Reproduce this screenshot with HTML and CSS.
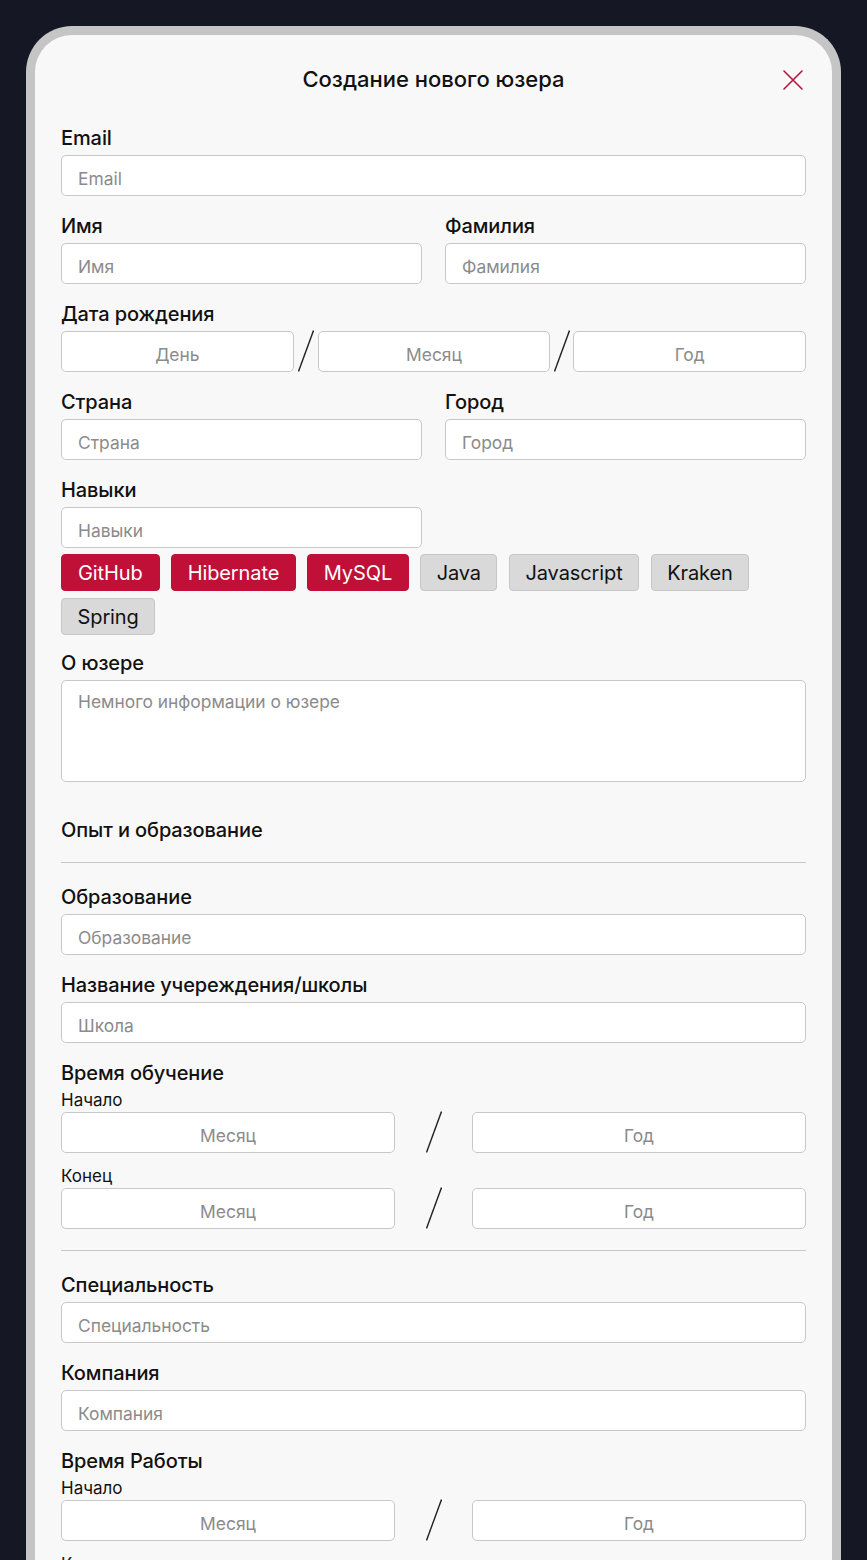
FILE: index.html
```html
<!DOCTYPE html>
<html lang="ru">
<head>
<meta charset="utf-8">
<title>Создание нового юзера</title>
<link rel="stylesheet" href="styles.css">
</head>
<body>
<div class="card">
  <div class="header">
    <span></span>
    <h1 class="title">Создание нового юзера</h1>
    <button class="close" aria-label="Закрыть">
      <svg width="20" height="20" viewBox="0 0 20 20"><path d="M1 1 L19 19 M19 1 L1 19" stroke="#b8123d" stroke-width="1.6" fill="none" stroke-linecap="round"/></svg>
    </button>
  </div>

  <div class="field first">
    <div class="label">Email</div>
    <input class="input" placeholder="Email">
  </div>

  <div class="row2">
    <div class="field">
      <div class="label">Имя</div>
      <input class="input" placeholder="Имя">
    </div>
    <div class="field">
      <div class="label">Фамилия</div>
      <input class="input" placeholder="Фамилия">
    </div>
  </div>

  <div class="field">
    <div class="label">Дата рождения</div>
    <div class="date3">
      <input class="input center" placeholder="День">
      <span class="slash"><svg width="16" height="42" viewBox="0 0 16 42"><path d="M15.5 0.5 L0.5 41.5" stroke="#222" stroke-width="1.4" fill="none"/></svg></span>
      <input class="input center" placeholder="Месяц">
      <span class="slash"><svg width="16" height="42" viewBox="0 0 16 42"><path d="M15.5 0.5 L0.5 41.5" stroke="#222" stroke-width="1.4" fill="none"/></svg></span>
      <input class="input center" placeholder="Год">
    </div>
  </div>

  <div class="row2">
    <div class="field">
      <div class="label">Страна</div>
      <input class="input" placeholder="Страна">
    </div>
    <div class="field">
      <div class="label">Город</div>
      <input class="input" placeholder="Город">
    </div>
  </div>

  <div class="row2">
    <div class="field">
      <div class="label">Навыки</div>
      <input class="input" placeholder="Навыки">
    </div>
  </div>

  <div class="tags">
    <span class="tag active wide">GitHub</span>
    <span class="tag active">Hibernate</span>
    <span class="tag active">MySQL</span>
    <span class="tag">Java</span>
    <span class="tag">Javascript</span>
    <span class="tag">Kraken</span>
    <span class="tag">Spring</span>
  </div>

  <div class="field about">
    <div class="label">О юзере</div>
    <textarea class="input textarea" placeholder="Немного информации о юзере"></textarea>
  </div>

  <div class="section-title">Опыт и образование</div>
  <hr class="divider">

  <div class="field after-divider">
    <div class="label">Образование</div>
    <input class="input" placeholder="Образование">
  </div>

  <div class="field">
    <div class="label">Название учереждения/школы</div>
    <input class="input" placeholder="Школа">
  </div>

  <div class="field">
    <div class="label">Время обучение</div>
    <div class="sublabel">Начало</div>
    <div class="date2">
      <input class="input center" placeholder="Месяц">
      <span class="slash"><svg width="16" height="42" viewBox="0 0 16 42"><path d="M15.5 0.5 L0.5 41.5" stroke="#222" stroke-width="1.4" fill="none"/></svg></span>
      <input class="input center" placeholder="Год">
    </div>
    <div class="sublabel next">Конец</div>
    <div class="date2">
      <input class="input center" placeholder="Месяц">
      <span class="slash"><svg width="16" height="42" viewBox="0 0 16 42"><path d="M15.5 0.5 L0.5 41.5" stroke="#222" stroke-width="1.4" fill="none"/></svg></span>
      <input class="input center" placeholder="Год">
    </div>
  </div>

  <hr class="divider second">

  <div class="field after-divider">
    <div class="label">Специальность</div>
    <input class="input" placeholder="Специальность">
  </div>

  <div class="field">
    <div class="label">Компания</div>
    <input class="input" placeholder="Компания">
  </div>

  <div class="field">
    <div class="label">Время Работы</div>
    <div class="sublabel">Начало</div>
    <div class="date2">
      <input class="input center" placeholder="Месяц">
      <span class="slash"><svg width="16" height="42" viewBox="0 0 16 42"><path d="M15.5 0.5 L0.5 41.5" stroke="#222" stroke-width="1.4" fill="none"/></svg></span>
      <input class="input center" placeholder="Год">
    </div>
    <div class="sublabel next">Конец</div>
    <div class="date2">
      <input class="input center" placeholder="Месяц">
      <span class="slash"><svg width="16" height="42" viewBox="0 0 16 42"><path d="M15.5 0.5 L0.5 41.5" stroke="#222" stroke-width="1.4" fill="none"/></svg></span>
      <input class="input center" placeholder="Год">
    </div>
  </div>
</div>
</body>
</html>
```

FILE: styles.css
```css
* { box-sizing: border-box; }

html, body {
  margin: 0;
  padding: 0;
  background: #151824;
  font-family: Inter, "Noto Sans", "DejaVu Sans", sans-serif;
  color: #111;
}

body {
  height: 1560px;
  overflow: hidden;
}

.card {
  margin: 26px 26px 0 26px;
  width: 815px;
  min-height: 1600px;
  background: #f8f8f8;
  border: 9px solid #c5c5c5;
  border-bottom: none;
  border-radius: 46px 46px 0 0;
  padding: 30px 26px 40px 26px;
}

.header {
  display: grid;
  grid-template-columns: 1fr auto 1fr;
  align-items: center;
  height: 28px;
}

.title {
  margin: 0;
  font-size: 22px;
  line-height: 28px;
  font-weight: 500;
  color: #111;
  text-align: center;
}

.close {
  justify-self: end;
  margin-right: 3px;
  margin-top: 2px;
  width: 20px;
  height: 20px;
  padding: 0;
  border: none;
  background: transparent;
  display: flex;
}

.field { margin-top: 18px; }
.field.first { margin-top: 33px; }

.label {
  font-size: 20px;
  line-height: 24px;
  font-weight: 500;
  letter-spacing: -0.1px;
  margin-bottom: 5px;
  color: #111;
}

.sublabel {
  font-size: 17px;
  line-height: 20px;
  font-weight: 400;
  margin-top: 1px;
  margin-bottom: 2px;
  color: #111;
}
.sublabel.next { margin-top: 13px; }

.input {
  display: block;
  width: 100%;
  height: 41px;
  border: 1px solid #c8c8c8;
  border-radius: 5px;
  background: #fff;
  padding: 5px 16px 0 16px;
  font-family: Inter, "Noto Sans", sans-serif;
  font-size: 17.4px;
  font-weight: 400;
  color: #333;
  outline: none;
}
.input::placeholder { color: #8b8b8b; }
.input.center { text-align: center; }

.textarea {
  height: 102px;
  padding: 10px 16px;
  resize: none;
  line-height: 22px;
}

.row2 {
  display: grid;
  grid-template-columns: 1fr 1fr;
  column-gap: 23px;
}

.date3 {
  display: grid;
  grid-template-columns: 1fr 24px 1fr 23px 1fr;
  align-items: start;
}

.date2 {
  display: grid;
  grid-template-columns: 1fr 77px 1fr;
  align-items: start;
}

.slash {
  display: flex;
  justify-content: center;
  height: 41px;
  overflow: visible;
}
.slash svg { display: block; margin-top: -1px; }

.tags {
  display: flex;
  flex-wrap: wrap;
  gap: 7px 11.5px;
  margin-top: 6px;
}

.tag {
  display: inline-flex;
  align-items: center;
  height: 37px;
  padding: 0 15.5px;
  border-radius: 4px;
  font-size: 20px;
  letter-spacing: -0.1px;
  background: #d9d9d9;
  border: 1px solid #c6c6c6;
  color: #111;
}
.tag.wide { padding: 0 16px; }
.tag.active {
  background: #c01038;
  border-color: #c01038;
  color: #fff;
}

.field.about { margin-top: 16px; }

.section-title {
  margin-top: 36px;
  font-size: 20px;
  line-height: 24px;
  font-weight: 500;
  letter-spacing: -0.1px;
}

.divider {
  margin: 20px 0 0 0;
  border: none;
  height: 1px;
  background: #c8c8c8;
}
.divider.second { margin-top: 21px; }

.field.after-divider { margin-top: 22px; }
```
